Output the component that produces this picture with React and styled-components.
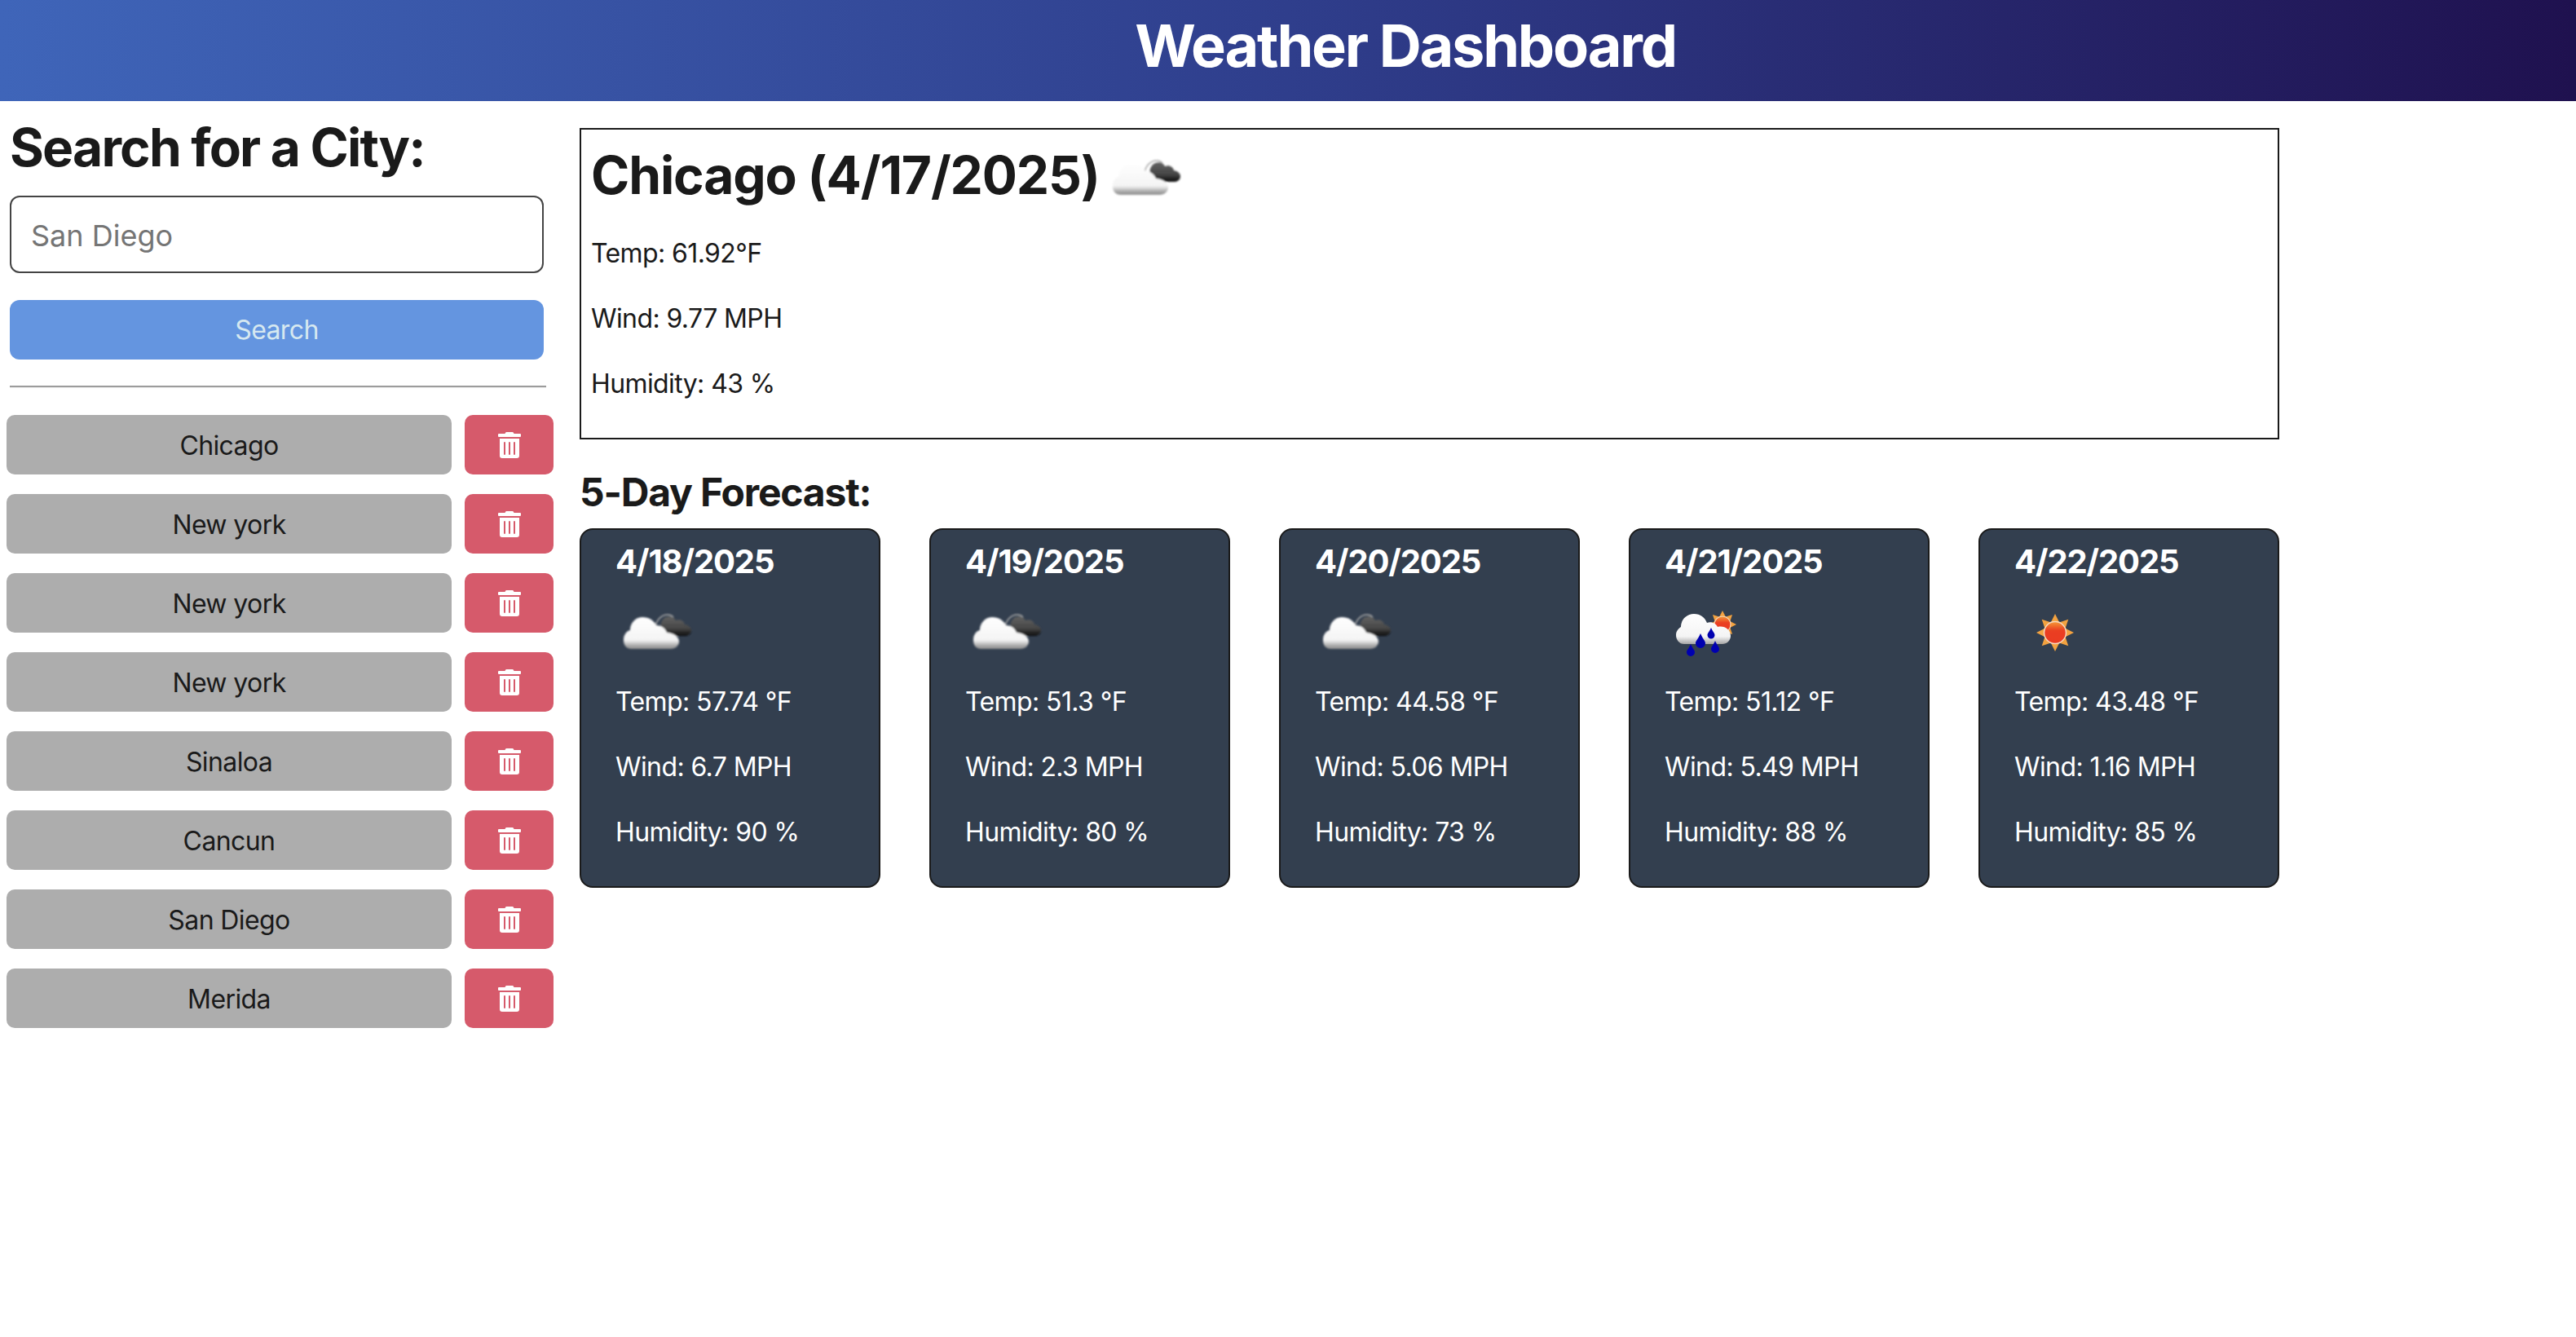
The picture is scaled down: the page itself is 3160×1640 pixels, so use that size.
import React from "react";
import styled, { createGlobalStyle } from "styled-components";
import { FaTrashAlt } from "react-icons/fa";

const GlobalStyle = createGlobalStyle`
    * { box-sizing: border-box; }
    body {
        margin: 0;
        background: #fff;
        color: #1a1a1a;
        font-family: Inter, "Liberation Sans", sans-serif;
    }
`;

const Header = styled.header`
    height: 124px;
    background: linear-gradient(90deg, #3f65b9 0%, #2f3e8c 50%, #1f114f 100%);
    display: flex;
    align-items: center;
    justify-content: center;
    padding: 0 0 12px 288px;
`;

const Title = styled.h1`
    margin: 0;
    color: #fff;
    font-size: 72px;
    line-height: 106px;
    font-weight: 700;
    letter-spacing: -2.2px;
`;

const Page = styled.main`
    display: flex;
    align-items: flex-start;
    gap: 16px;
`;

const Sidebar = styled.aside`
    width: 695px;
    flex: none;
    padding-top: 20px;
`;

const SearchForm = styled.form`
    display: flex;
    flex-direction: column;
    padding: 0 24px 0 12px;
`;

const SearchTitle = styled.h2`
    margin: 0 0 23px;
    font-size: 64px;
    line-height: 73px;
    font-weight: 700;
    letter-spacing: -1.8px;
    white-space: nowrap;
`;

const CityInput = styled.input`
    height: 95px;
    width: 655px;
    padding: 2px 24px 0;
    border: 2px solid #444;
    border-radius: 12px;
    font: 400 36px Inter, sans-serif;
    color: #1a1a1a;
    &::placeholder { color: #757575; opacity: 1; }
`;

const SearchButton = styled.button`
    height: 73px;
    width: 655px;
    margin-top: 33px;
    border: none;
    border-radius: 12px;
    background: #6495e0;
    color: #d6e8f0;
    font: 400 32px Inter, sans-serif;
    letter-spacing: -0.6px;
`;

const Divider = styled.hr`
    width: 658px;
    height: 3px;
    margin: 32px 0 33px;
    border: none;
    border-top: 2px solid #9c9c9c;
    background: #eee;
`;

const CityList = styled.ul`
    list-style: none;
    margin: 0;
    padding: 0 0 0 8px;
    display: flex;
    flex-direction: column;
    gap: 24px;
`;

const CityRow = styled.li`
    display: flex;
    gap: 16px;
`;

const CityButton = styled.button`
    width: 546px;
    height: 73px;
    padding: 2px 0 0;
    border: none;
    border-radius: 10px;
    background: #adadad;
    color: #1a1a1a;
    font: 400 32px Inter, sans-serif;
    letter-spacing: -0.6px;
`;

const DeleteButton = styled.button`
    width: 109px;
    height: 73px;
    border: none;
    border-radius: 10px;
    background: #d65a6b;
    color: #fff;
    display: flex;
    align-items: center;
    justify-content: center;
    font-size: 32px;
`;

const Content = styled.section`
    width: 2085px;
    flex: none;
    padding-top: 33px;
`;

const CurrentBox = styled.div`
    height: 382px;
    padding: 0 12px;
    border: 2px solid #1a1a1a;
`;

const CurrentTitle = styled.h2`
    margin: 0;
    height: 111px;
    display: flex;
    align-items: center;
    font-size: 64px;
    font-weight: 700;
    letter-spacing: -1.15px;
    white-space: pre;
`;

const TitleIcon = styled.span`
    display: block;
    width: 100px;
    height: 100px;
    flex: none;
    margin: 9px 0 0 6px;
`;

const Stat = styled.p`
    margin: 0;
    height: 80px;
    display: flex;
    align-items: center;
    font-size: 32px;
    letter-spacing: -0.6px;
    color: ${(p) => (p.$light ? "#fff" : "#1a1a1a")};
`;

const ForecastTitle = styled.h3`
    margin: 38px 0 17px;
    height: 54px;
    line-height: 54px;
    font-size: 48px;
    font-weight: 700;
    letter-spacing: -1.2px;
`;

const CardGrid = styled.div`
    display: grid;
    grid-template-columns: repeat(5, 369px);
    gap: 60px;
`;

const Card = styled.article`
    height: 441px;
    padding: 0 42px;
    border: 2px solid #1a1a1a;
    border-radius: 16px;
    background: #333f4f;
    color: #fff;
`;

const CardDate = styled.h4`
    margin: 0;
    height: 76px;
    display: flex;
    align-items: center;
    font-size: 40px;
    font-weight: 700;
    letter-spacing: -1.1px;
`;

const CardIcon = styled.div`
    height: 94px;
`;

const CloudsIcon = () => (
    <svg viewBox="0 0 100 100" width="100" height="100">
        <defs>
            <linearGradient id="cloudLight" x1="0" y1="0" x2="0" y2="1">
                <stop offset="0" stopColor="#fff" />
                <stop offset="0.72" stopColor="#f4f4f4" />
                <stop offset="0.9" stopColor="#a9a9a9" />
                <stop offset="1" stopColor="#8e8e8e" />
            </linearGradient>
            <linearGradient id="cloudDark" x1="0" y1="0" x2="0" y2="1">
                <stop offset="0" stopColor="#626262" />
                <stop offset="0.6" stopColor="#474747" />
                <stop offset="1" stopColor="#0c0c0c" />
            </linearGradient>
            <filter id="iconSoft" x="-20%" y="-20%" width="140%" height="140%">
                <feGaussianBlur stdDeviation="0.8" />
            </filter>
        </defs>
        <g filter="url(#iconSoft)">
            <path d="M49 43C50 35 56 28 64 28C67 28 69 29 71 31" fill="none" stroke="#a8a8a8" strokeWidth="1.6" />
            <path
                d="M58 53C54 45 54 35 62 31C68 29 72 31 74 35C80 33 84 36 85 40C90 41 93 44 93 47C93 51 90 54 86 54L62 54Z"
                fill="url(#cloudDark)"
            />
            <path
                d="M20 70C12 70 10 64 10 59C10 52 14 48 18 47C18 38 25 31 33 31C41 31 47 35 50 41C57 41 62 46 63 50C71 50 78 55 78 61C78 66 73 70 68 70Z"
                fill="url(#cloudLight)"
            />
        </g>
    </svg>
);

const SunShape = ({ cx, cy, scale }) => (
    <g transform={`translate(${cx} ${cy}) scale(${scale})`}>
        {[0, 45, 90, 135, 180, 225, 270, 315].map((deg) => (
            <polygon key={deg} points="-6,-11 0,-23 6,-11" fill="#f3a23f" transform={`rotate(${deg})`} />
        ))}
        <circle r="14" fill="#f3a23f" />
        <circle r="13.5" fill="url(#sunDisc)" stroke="#f6d9c0" strokeWidth="1.5" />
    </g>
);

const SunDefs = () => (
    <defs>
        <linearGradient id="sunDisc" x1="0" y1="0" x2="0" y2="1">
            <stop offset="0" stopColor="#f59a36" />
            <stop offset="0.4" stopColor="#ea3f22" />
            <stop offset="1" stopColor="#ea3a20" />
        </linearGradient>
        <filter id="sunSoft" x="-20%" y="-20%" width="140%" height="140%">
            <feGaussianBlur stdDeviation="0.6" />
        </filter>
        <linearGradient id="rainCloud" x1="0" y1="0" x2="0" y2="1">
            <stop offset="0" stopColor="#fff" />
            <stop offset="0.75" stopColor="#f4f4f4" />
            <stop offset="1" stopColor="#a5a5a5" />
        </linearGradient>
    </defs>
);

const SunIcon = () => (
    <svg viewBox="0 0 100 100" width="100" height="100">
        <SunDefs />
        <g filter="url(#sunSoft)">
            <SunShape cx={50} cy={50} scale={1} />
        </g>
    </svg>
);

const Drop = ({ x, y, r }) => (
    <path
        d={`M${x} ${y - r * 2}C${x + r * 0.4} ${y - r} ${x + r} ${y - r * 0.5} ${x + r} ${y}A${r} ${r} 0 0 1 ${x - r} ${y}C${x - r} ${y - r * 0.5} ${x - r * 0.4} ${y - r} ${x} ${y - r * 2}Z`}
        fill="#0000b0"
    />
);

const RainIcon = () => (
    <svg viewBox="0 0 100 100" width="100" height="100">
        <SunDefs />
        <g filter="url(#sunSoft)">
            <SunShape cx={71} cy={40} scale={0.74} />
            <path
                d="M24 64C18 64 14 59 14 53C14 48 17 45 20 43C20 34 27 27 36 27C44 27 49 31 52 38C58 36 63 39 65 43C73 41 81 46 81 54C81 60 76 64 71 64Z"
                fill="url(#rainCloud)"
            />
            <Drop x={32} y={74} r={5} />
            <Drop x={44} y={63} r={6} />
            <Drop x={57} y={53} r={4.5} />
            <Drop x={62} y={70} r={5} />
        </g>
    </svg>
);

const icons = { clouds: CloudsIcon, rain: RainIcon, sun: SunIcon };

const cities = ["Chicago", "New york", "New york", "New york", "Sinaloa", "Cancun", "San Diego", "Merida"];

const forecast = [
    { date: "4/18/2025", icon: "clouds", temp: "57.74", wind: "6.7", humidity: 90 },
    { date: "4/19/2025", icon: "clouds", temp: "51.3", wind: "2.3", humidity: 80 },
    { date: "4/20/2025", icon: "clouds", temp: "44.58", wind: "5.06", humidity: 73 },
    { date: "4/21/2025", icon: "rain", temp: "51.12", wind: "5.49", humidity: 88 },
    { date: "4/22/2025", icon: "sun", temp: "43.48", wind: "1.16", humidity: 85 },
];

const App = () => (
    <>
        <GlobalStyle />
        <Header>
            <Title>Weather Dashboard</Title>
        </Header>
        <Page>
            <Sidebar>
                <SearchForm onSubmit={(e) => e.preventDefault()}>
                    <SearchTitle>Search for a City:</SearchTitle>
                    <CityInput placeholder="San Diego" />
                    <SearchButton>Search</SearchButton>
                    <Divider />
                </SearchForm>
                <CityList>
                    {cities.map((city, i) => (
                        <CityRow key={i}>
                            <CityButton>{city}</CityButton>
                            <DeleteButton aria-label={`Delete ${city}`}>
                                <FaTrashAlt />
                            </DeleteButton>
                        </CityRow>
                    ))}
                </CityList>
            </Sidebar>
            <Content>
                <CurrentBox>
                    <CurrentTitle>
                        Chicago (4/17/2025)
                        <TitleIcon>
                            <CloudsIcon />
                        </TitleIcon>
                    </CurrentTitle>
                    <Stat>Temp: 61.92°F</Stat>
                    <Stat>Wind: 9.77 MPH</Stat>
                    <Stat>Humidity: 43 %</Stat>
                </CurrentBox>
                <ForecastTitle>5-Day Forecast:</ForecastTitle>
                <CardGrid>
                    {forecast.map((day) => {
                        const Icon = icons[day.icon];
                        return (
                            <Card key={day.date}>
                                <CardDate>{day.date}</CardDate>
                                <CardIcon>
                                    <Icon />
                                </CardIcon>
                                <Stat $light>Temp: {day.temp} °F</Stat>
                                <Stat $light>Wind: {day.wind} MPH</Stat>
                                <Stat $light>Humidity: {day.humidity} %</Stat>
                            </Card>
                        );
                    })}
                </CardGrid>
            </Content>
        </Page>
    </>
);

export default App;
